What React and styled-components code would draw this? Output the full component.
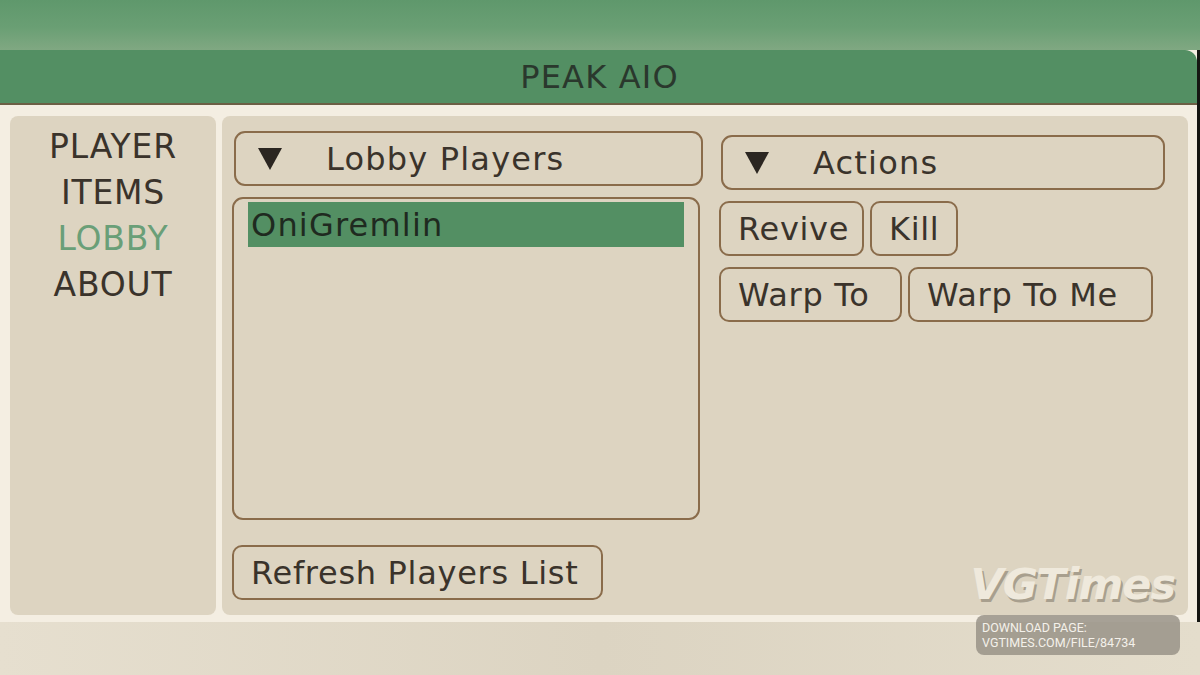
import React from "react";
import styled, { createGlobalStyle } from "styled-components";

const GlobalStyle = createGlobalStyle`
  html, body { margin: 0; padding: 0; }
  body { background: #e3dbc9; font-family: "DejaVu Sans", "Lato", sans-serif; }
`;

const FONT = `"DejaVu Sans", "Lato", sans-serif`;

const Page = styled.div`
  position: relative;
  width: 1200px;
  height: 675px;
  overflow: hidden;
  display: flex;
  flex-direction: column;
  background: linear-gradient(90deg, #e6dfcf 0%, #dcd4c2 50%, #e4ddcc 100%);
`;

const TopBand = styled.div`
  height: 50px;
  flex: none;
  background: linear-gradient(180deg, #5f986c 0%, #6a9f74 55%, #80a882 100%);
`;

const Window = styled.div`
  height: 572px;
  flex: none;
  display: flex;
  flex-direction: column;
  border-right: 3px solid #151612;
  background: #f4eee2;
`;

const TitleBar = styled.div`
  height: 53px;
  flex: none;
  display: flex;
  align-items: center;
  justify-content: center;
  background: #538f63;
  border-top-right-radius: 12px;
  border-bottom: 2px solid #6c5f45;
  font-family: ${FONT};
  font-size: 32px;
  letter-spacing: 1.2px;
  color: #2a382d;
  padding-left: 2px;
`;

const Body = styled.div`
  flex: 1;
  display: grid;
  grid-template-columns: 206px 966px;
  column-gap: 6px;
  padding: 11px 9px 7px 10px;
`;

const Sidebar = styled.nav`
  background: #ddd4c1;
  border-radius: 8px;
  display: flex;
  flex-direction: column;
  align-items: center;
  padding-top: 8px;
`;

const NavItem = styled.div`
  font-family: ${FONT};
  font-size: 33px;
  line-height: 46px;
  letter-spacing: 0.8px;
  color: ${(p) => (p.$active ? "#6a9f78" : "#3a332b")};
`;

const Content = styled.section`
  background: #ddd4c1;
  border-radius: 8px;
  display: flex;
  gap: 16px;
  padding: 15px 10px 0 10px;
`;

const Column = styled.div`
  width: ${(p) => p.$w}px;
  display: flex;
  flex-direction: column;
  padding-top: ${(p) => p.$top || 0}px;
`;

const Header = styled.div`
  height: 55px;
  box-sizing: border-box;
  border: 2px solid #8a6c4b;
  border-radius: 11px;
  display: flex;
  align-items: center;
  padding-left: 22px;
  margin-left: 2px;
  font-family: ${FONT};
  font-size: 32px;
  letter-spacing: 1.2px;
  color: #3a332b;
`;

const Triangle = styled.span`
  width: 0;
  height: 0;
  border-left: 12px solid transparent;
  border-right: 12px solid transparent;
  border-top: 22px solid #2b2621;
  margin-right: 44px;
  margin-top: 1px;
`;

const ListBox = styled.div`
  margin-top: 11px;
  width: 468px;
  height: 323px;
  box-sizing: border-box;
  border: 2px solid #8a6c4b;
  border-radius: 11px;
  padding: 3px 14px 0 14px;
`;

const ListRow = styled.div`
  height: 45px;
  display: flex;
  align-items: center;
  padding-left: 3px;
  background: ${(p) => (p.$selected ? "#538f63" : "transparent")};
  font-family: ${FONT};
  font-size: 32px;
  letter-spacing: 1.2px;
  color: #1f2a20;
`;

const Button = styled.div`
  width: ${(p) => p.$w}px;
  height: 55px;
  box-sizing: border-box;
  border: 2px solid #8a6c4b;
  border-radius: 10px;
  display: inline-flex;
  align-items: center;
  padding-left: 17px;
  font-family: ${FONT};
  font-size: 32px;
  letter-spacing: 0.7px;
  color: #3a332b;
  white-space: nowrap;
`;

const BottomRow = styled.div`
  margin-top: 25px;
  display: flex;
`;

const ButtonRow = styled.div`
  margin-top: 11px;
  display: flex;
  gap: 6px;
`;

const BottomBand = styled.div`
  flex: 1;
`;

const Watermark = styled.div`
  position: absolute;
  right: 20px;
  top: 558px;
  display: flex;
  flex-direction: column;
  align-items: flex-end;
`;

const WatermarkLogo = styled.div`
  font-family: "DejaVu Sans", sans-serif;
  font-weight: bold;
  font-style: italic;
  font-size: 43px;
  letter-spacing: -1px;
  color: #efe9dc;
  text-shadow: 2px 3px 0 #a89f8e;
  margin-right: 5px;
  line-height: 52px;
`;

const WatermarkBox = styled.div`
  margin-top: 5px;
  width: 204px;
  height: 40px;
  box-sizing: border-box;
  padding: 5px 6px;
  border-radius: 8px;
  background: rgba(150, 144, 133, 0.82);
  color: #f4f1ea;
  font-family: "Roboto", "Liberation Sans", sans-serif;
  font-size: 12.5px;
  line-height: 15px;
`;

export default function App() {
  return (
    <Page>
      <GlobalStyle />
      <TopBand />
      <Window>
        <TitleBar>PEAK AIO</TitleBar>
        <Body>
          <Sidebar>
            <NavItem>PLAYER</NavItem>
            <NavItem>ITEMS</NavItem>
            <NavItem $active>LOBBY</NavItem>
            <NavItem>ABOUT</NavItem>
          </Sidebar>
          <Content>
            <Column $w={471}>
              <Header>
                <Triangle />
                Lobby Players
              </Header>
              <ListBox>
                <ListRow $selected>OniGremlin</ListRow>
              </ListBox>
              <BottomRow>
                <Button $w={371}>Refresh Players List</Button>
              </BottomRow>
            </Column>
            <Column $w={446} $top={4}>
              <Header>
                <Triangle />
                Actions
              </Header>
              <ButtonRow>
                <Button $w={145}>Revive</Button>
                <Button $w={88}>Kill</Button>
              </ButtonRow>
              <ButtonRow>
                <Button $w={183}>Warp To</Button>
                <Button $w={245}>Warp To Me</Button>
              </ButtonRow>
            </Column>
          </Content>
        </Body>
      </Window>
      <BottomBand />
      <Watermark>
        <WatermarkLogo>VGTimes</WatermarkLogo>
        <WatermarkBox>
          DOWNLOAD PAGE:
          <br />
          VGTIMES.COM/FILE/84734
        </WatermarkBox>
      </Watermark>
    </Page>
  );
}
